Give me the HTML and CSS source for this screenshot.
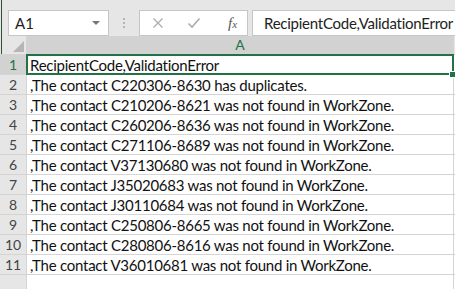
FILE: index.html
```html
<!DOCTYPE html>
<html lang="en">
<head>
    <meta charset="UTF-8">
    <meta name="viewport" content="width=device-width, initial-scale=1.0">
    <title>Book1 - Excel</title>
    <link rel="stylesheet" href="styles.css">
</head>
<body>
    <div class="window">
        <div class="topline"></div>

        <div class="formula-bar">
            <div class="name-box">
                <span>A1</span>
                <span class="caret"></span>
            </div>
            <div class="grip"><i></i><i></i><i></i></div>
            <div class="fx-buttons">
                <svg class="btn" width="12" height="12" viewBox="0 0 12 12">
                    <path d="M1.5 1.5 L10.5 10.5 M10.5 1.5 L1.5 10.5" stroke="#acacac" stroke-width="1.3" fill="none"/>
                </svg>
                <svg class="btn" width="14" height="12" viewBox="0 0 14 12">
                    <path d="M1.5 6.5 L5 10 L12.5 1.5" stroke="#acacac" stroke-width="1.6" fill="none"/>
                </svg>
                <span class="fx">f<sub>x</sub></span>
            </div>
            <div class="formula-input">RecipientCode,ValidationError</div>
        </div>

        <div class="sheet">
            <div class="corner"><span class="tri"></span></div>
            <div class="col-head selected">A</div>
            <div class="col-head">&nbsp;</div>

            <div class="row-head selected">1</div>
            <div class="cell active">RecipientCode,ValidationError<span class="handle"></span></div>
            <div class="cell"></div>

            <div class="row-head">2</div>
            <div class="cell">,The contact C220306-8630 has duplicates.</div>
            <div class="cell"></div>

            <div class="row-head">3</div>
            <div class="cell">,The contact C210206-8621 was not found in WorkZone.</div>
            <div class="cell"></div>

            <div class="row-head">4</div>
            <div class="cell">,The contact C260206-8636 was not found in WorkZone.</div>
            <div class="cell"></div>

            <div class="row-head">5</div>
            <div class="cell">,The contact C271106-8689 was not found in WorkZone.</div>
            <div class="cell"></div>

            <div class="row-head">6</div>
            <div class="cell">,The contact V37130680 was not found in WorkZone.</div>
            <div class="cell"></div>

            <div class="row-head">7</div>
            <div class="cell">,The contact J35020683 was not found in WorkZone.</div>
            <div class="cell"></div>

            <div class="row-head">8</div>
            <div class="cell">,The contact J30110684 was not found in WorkZone.</div>
            <div class="cell"></div>

            <div class="row-head">9</div>
            <div class="cell">,The contact C250806-8665 was not found in WorkZone.</div>
            <div class="cell"></div>

            <div class="row-head">10</div>
            <div class="cell">,The contact C280806-8616 was not found in WorkZone.</div>
            <div class="cell"></div>

            <div class="row-head">11</div>
            <div class="cell">,The contact V36010681 was not found in WorkZone.</div>
            <div class="cell"></div>

            <div class="row-head"></div>
            <div class="cell"></div>
            <div class="cell"></div>
        </div>
    </div>
</body>
</html>
```

FILE: styles.css
```css
body {
    margin: 0;
    padding: 0;
    font-family: Lato, "Open Sans", sans-serif;
    background-color: #e6e6e6;
    overflow: hidden;
}
.window {
    width: 455px;
    height: 289px;
    overflow: hidden;
    display: flex;
    flex-direction: column;
}
.topline {
    height: 2px;
    background-color: #f1e59c;
    box-shadow: inset 2px 0 0 #e6e6e6, inset 3px 0 0 #2f4f3a;
}

/* formula bar */
.formula-bar {
    height: 46px;
    display: flex;
    align-items: flex-start;
    padding: 10px 0 0 8px;
    box-sizing: border-box;
    box-shadow: inset 1px 0 0 #e6e6e6, inset 2px 0 0 #2f4f3a;
}
.name-box {
    width: 101px;
    height: 26px;
    background: white;
    border: 1px solid #c6c6c6;
    display: flex;
    align-items: center;
    justify-content: space-between;
    padding: 0 8px 0 6px;
    box-sizing: border-box;
    font-size: 15px;
    color: #222;
}
.caret {
    width: 0;
    height: 0;
    border-left: 4px solid transparent;
    border-right: 4px solid transparent;
    border-top: 4px solid #777;
}
.grip {
    width: 30px;
    height: 26px;
    display: flex;
    flex-direction: column;
    align-items: center;
    justify-content: center;
    gap: 2px;
}
.grip i {
    width: 2px;
    height: 2px;
    background: #b4b4b4;
}
.fx-buttons {
    width: 109px;
    height: 26px;
    background: white;
    border: 1px solid #c6c6c6;
    display: flex;
    align-items: center;
    padding-left: 12px;
    box-sizing: border-box;
}
.fx-buttons .btn {
    margin-right: 23px;
}
.fx-buttons .btn + .btn {
    margin-right: 27px;
}
.fx {
    font-family: "Liberation Serif", serif;
    font-style: italic;
    font-size: 15px;
    color: #555;
}
.fx sub {
    font-size: 11px;
    vertical-align: 0;
}
.formula-input {
    flex: 1;
    height: 26px;
    margin-left: 4px;
    background: white;
    border: 1px solid #c6c6c6;
    border-right: none;
    box-sizing: border-box;
    padding-left: 11px;
    font-size: 15px;
    letter-spacing: -0.25px;
    line-height: 24px;
    color: #222;
    white-space: nowrap;
}

/* sheet: the 1px gaps show the grid lines */
.sheet {
    flex: 1;
    display: grid;
    grid-template-columns: 26px 426px 1fr;
    grid-template-rows: 18px;
    grid-auto-rows: 19px;
    gap: 1px;
    background: #d4d4d4;
    font-size: 15px;
}
.corner {
    background: #e6e6e6;
    box-shadow: inset 1px 0 0 #e6e6e6, inset 2px 0 0 #2f4f3a;
    position: relative;
}
.tri {
    position: absolute;
    right: 2px;
    bottom: 2px;
    width: 0;
    height: 0;
    border-left: 11px solid transparent;
    border-bottom: 11px solid #b5b5b5;
}
.col-head {
    background: #e6e6e6;
    text-align: center;
    font-size: 14px;
    line-height: 18px;
    color: #444;
}
.col-head.selected {
    background: #d2d2d2;
    color: #217346;
}
.row-head {
    background: #e6e6e6;
    text-align: center;
    font-size: 14px;
    line-height: 19px;
    color: #444;
}
.row-head.selected {
    background: #d2d2d2;
    color: #217346;
}
.cell {
    background: white;
    padding-left: 3px;
    line-height: 20px;
    letter-spacing: -0.25px;
    color: #111;
    white-space: nowrap;
}
.cell.active {
    position: relative;
    outline: 2px solid #217346;
    outline-offset: -1px;
}
.handle {
    position: absolute;
    right: -3px;
    bottom: -4px;
    width: 5px;
    height: 5px;
    background: #217346;
    border: 1px solid white;
}
```
